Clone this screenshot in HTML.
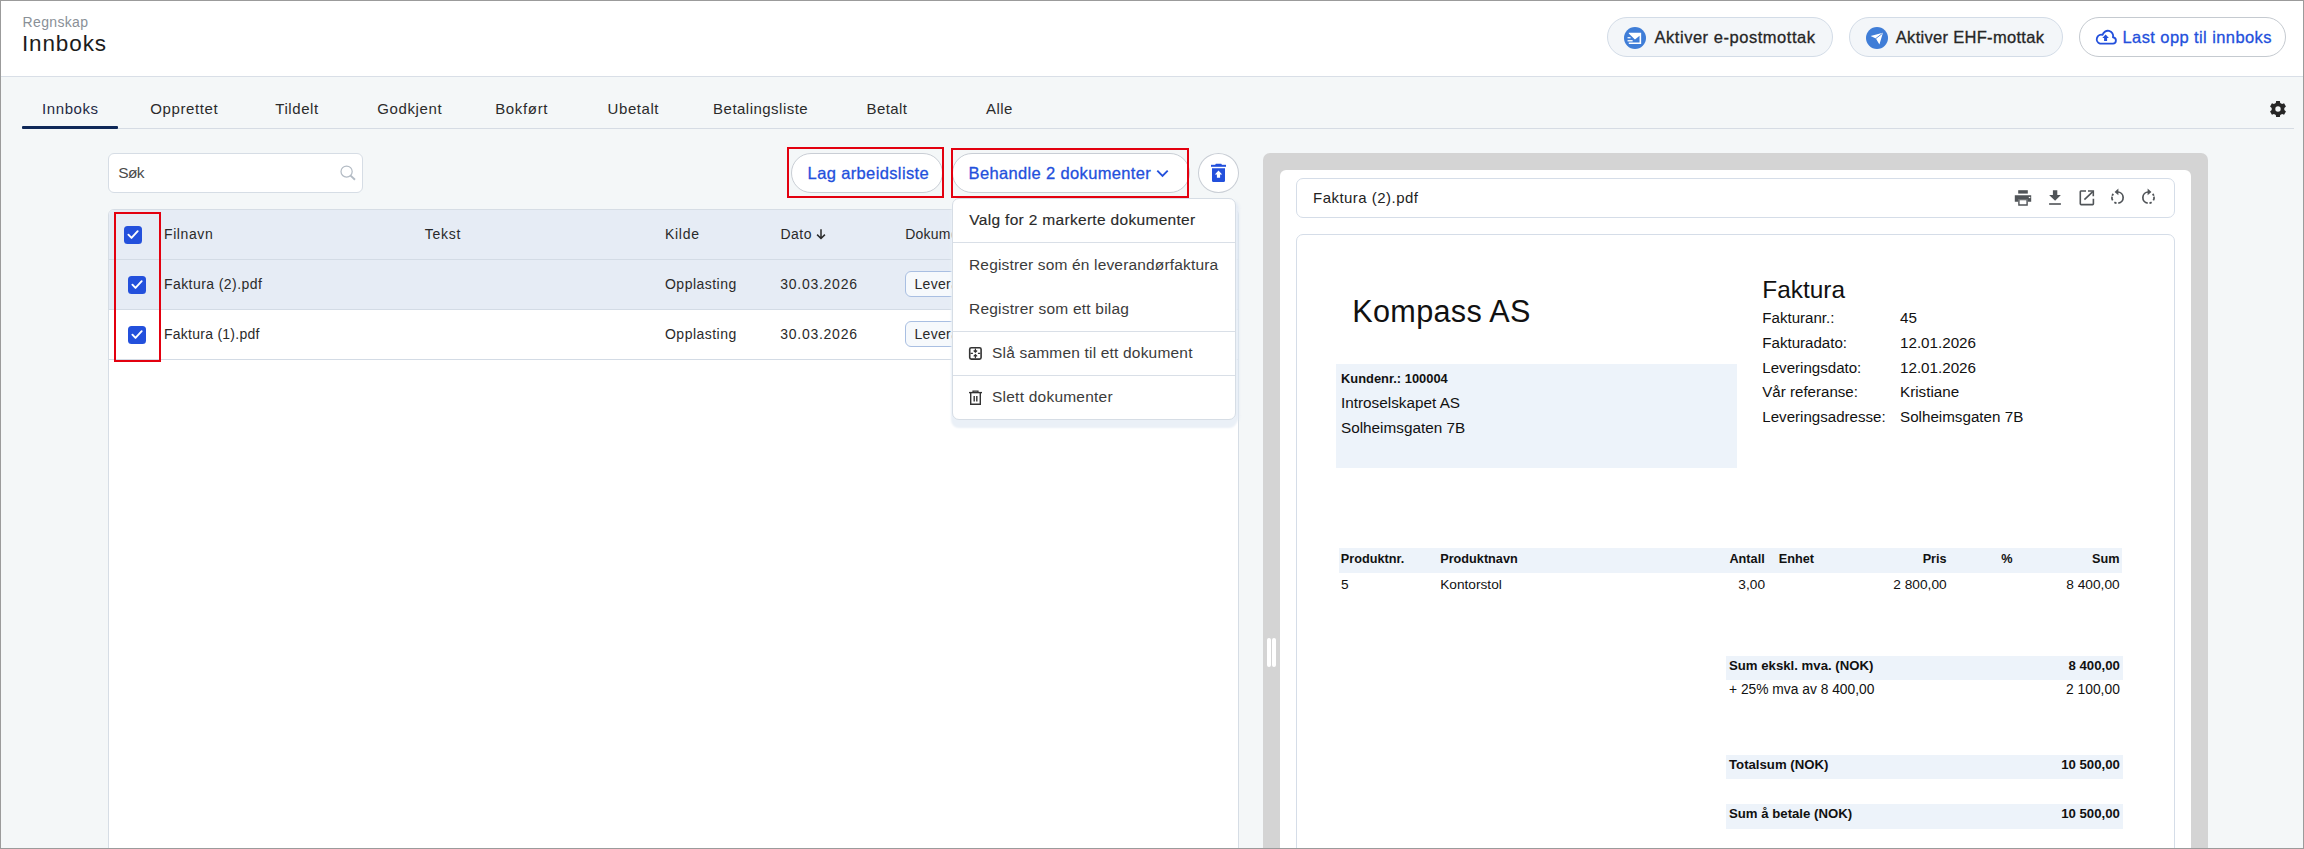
<!DOCTYPE html>
<html><head><meta charset="utf-8"><title>Innboks</title>
<style>
html,body{margin:0;padding:0}
body{width:2304px;height:849px;position:relative;overflow:hidden;background:#f4f7f8;font-family:"Liberation Sans",sans-serif}
.t{position:absolute;line-height:1;white-space:nowrap}
svg{display:block}
</style></head><body>
<div style="position:absolute;left:0px;top:0px;width:2304px;height:77px;box-sizing:border-box;background:#fff;border-bottom:1px solid #d9dfe7"></div>
<div class="t" style="left:22.60px;top:15.00px;font-size:14px;color:#8a9097;font-weight:400;letter-spacing:0.329px;">Regnskap</div>
<div class="t" style="left:21.90px;top:33.05px;font-size:22.5px;color:#1c1c1c;font-weight:400;letter-spacing:0.9px;">Innboks</div>
<div style="position:absolute;left:1607px;top:17px;width:226px;height:40px;box-sizing:border-box;background:#f3f6f9;border:1px solid #d3dce7;border-radius:20px"></div>
<svg style="position:absolute;left:1624px;top:26.7px" width="22" height="22" viewBox="0 0 22 22">
<circle cx="11" cy="11" r="11" fill="#3f7dd7"/>
<path d="M4.8 5.65 H17.15 V17 H4.8 V15.55 H15.55 V8.85 L10.95 12.4 L4.8 6.4 Z" fill="#fff"/>
<rect x="3.55" y="10.1" width="3" height="1.25" fill="#fff"/><rect x="3.55" y="13.1" width="5.1" height="1.35" fill="#fff"/>
</svg>
<div class="t" style="left:1654.50px;top:28.75px;font-size:16.5px;color:#262626;font-weight:400;letter-spacing:0.532px;-webkit-text-stroke:0.3px #262626">Aktiver e-postmottak</div>
<div style="position:absolute;left:1849px;top:17px;width:214px;height:40px;box-sizing:border-box;background:#f3f6f9;border:1px solid #d3dce7;border-radius:20px"></div>
<svg style="position:absolute;left:1866px;top:26.7px" width="22" height="22" viewBox="0 0 22 22">
<circle cx="11" cy="11" r="11" fill="#3f7dd7"/>
<path d="M4.6 9.0 L16.95 5.85 L13.4 17.5 L9.9 11.5 Z" fill="#fff"/>
<path d="M9.6 11.7 L16.4 6.4" stroke="#3f7dd7" stroke-width="0.9"/>
</svg>
<div class="t" style="left:1895.80px;top:28.75px;font-size:16.5px;color:#262626;font-weight:400;letter-spacing:0.3px;-webkit-text-stroke:0.3px #262626">Aktiver EHF-mottak</div>
<div style="position:absolute;left:2079px;top:17px;width:207px;height:40px;box-sizing:border-box;background:#fff;border:1px solid #c5cad0;border-radius:20px"></div>
<svg style="position:absolute;left:2093.5px;top:28px" width="24" height="20" viewBox="0 0 24 20">
<path d="M6 15.6 H18.6 A3.1 3.1 0 0 0 19 9.4 A5.3 5.3 0 0 0 8.6 6.9 A4.2 4.2 0 0 0 6 15.6 Z" fill="none" stroke="#2350dc" stroke-width="1.85" stroke-linejoin="round"/>
<path d="M11.6 6.6 L14.9 10.1 H13.1 V12.9 H10.1 V10.1 H8.3 Z" fill="#2350dc"/>
</svg>
<div class="t" style="left:2122.50px;top:28.75px;font-size:16.5px;color:#2350dc;font-weight:400;letter-spacing:0.405px;-webkit-text-stroke:0.3px #2350dc">Last opp til innboks</div>
<div class="t" style="left:42.10px;top:101.10px;font-size:15px;color:#1f2a44;font-weight:400;letter-spacing:0.566px;">Innboks</div>
<div class="t" style="left:150.30px;top:101.10px;font-size:15px;color:#2b2b2b;font-weight:400;letter-spacing:0.6px;">Opprettet</div>
<div class="t" style="left:275.30px;top:101.10px;font-size:15px;color:#2b2b2b;font-weight:400;letter-spacing:0.567px;">Tildelt</div>
<div class="t" style="left:377.20px;top:101.10px;font-size:15px;color:#2b2b2b;font-weight:400;letter-spacing:0.628px;">Godkjent</div>
<div class="t" style="left:495.20px;top:101.10px;font-size:15px;color:#2b2b2b;font-weight:400;letter-spacing:0.667px;">Bokført</div>
<div class="t" style="left:607.60px;top:101.10px;font-size:15px;color:#2b2b2b;font-weight:400;letter-spacing:0.567px;">Ubetalt</div>
<div class="t" style="left:713.10px;top:101.10px;font-size:15px;color:#2b2b2b;font-weight:400;letter-spacing:0.477px;">Betalingsliste</div>
<div class="t" style="left:866.60px;top:101.10px;font-size:15px;color:#2b2b2b;font-weight:400;letter-spacing:0.4px;">Betalt</div>
<div class="t" style="left:986.10px;top:101.10px;font-size:15px;color:#2b2b2b;font-weight:400;letter-spacing:0.4px;">Alle</div>
<div style="position:absolute;left:22px;top:128px;width:2272px;height:1px;box-sizing:border-box;background:#d6dce4"></div>
<div style="position:absolute;left:22px;top:126px;width:96px;height:3px;box-sizing:border-box;background:#0e2858;border-radius:1px"></div>
<svg style="position:absolute;left:2269px;top:100px" width="18" height="18" viewBox="0 0 18 18">
<path fill="#262626" fill-rule="evenodd" d="M6.81 2.99 L7.13 0.91 L10.87 0.91 L11.19 2.99 L13.11 4.10 L15.07 3.34 L16.94 6.57 L15.30 7.89 L15.30 10.11 L16.94 11.43 L15.07 14.66 L13.11 13.90 L11.19 15.01 L10.87 17.09 L7.13 17.09 L6.81 15.01 L4.89 13.90 L2.93 14.66 L1.06 11.43 L2.70 10.11 L2.70 7.89 L1.06 6.57 L2.93 3.34 L4.89 4.10 Z M11.7 9 A2.7 2.7 0 1 0 6.3 9 A2.7 2.7 0 1 0 11.7 9 Z"/>
</svg>
<div style="position:absolute;left:108px;top:153px;width:255px;height:40px;box-sizing:border-box;background:#fff;border:1px solid #d6dde5;border-radius:6px"></div>
<div class="t" style="left:118.20px;top:164.75px;font-size:15.5px;color:#4a4a4a;font-weight:400;letter-spacing:-0.6px;">Søk</div>
<svg style="position:absolute;left:338px;top:163px" width="20" height="20" viewBox="0 0 20 20">
<circle cx="8.6" cy="8.6" r="5.6" fill="none" stroke="#b3bbc4" stroke-width="1.25"/>
<path d="M12.6 12.6 L17 16.8" stroke="#b3bbc4" stroke-width="1.9"/>
</svg>
<div style="position:absolute;left:791px;top:153px;width:152px;height:40px;box-sizing:border-box;background:#fff;border:1px solid #c9ced5;border-radius:20px"></div>
<div class="t" style="left:807.60px;top:164.75px;font-size:16.5px;color:#2350dc;font-weight:400;letter-spacing:0.367px;-webkit-text-stroke:0.3px #2350dc">Lag arbeidsliste</div>
<div style="position:absolute;left:952px;top:153px;width:238px;height:40px;box-sizing:border-box;background:#fff;border:1px solid #c9ced5;border-radius:20px"></div>
<div class="t" style="left:968.60px;top:164.75px;font-size:16.5px;color:#2350dc;font-weight:400;letter-spacing:0.35px;-webkit-text-stroke:0.3px #2350dc">Behandle 2 dokumenter</div>
<svg style="position:absolute;left:1155px;top:167px" width="15" height="13" viewBox="0 0 15 13">
<path d="M2.3 3.6 L7.5 8.8 L12.7 3.6" fill="none" stroke="#2350dc" stroke-width="1.9"/>
</svg>
<div style="position:absolute;left:1198px;top:153px;width:41px;height:40px;box-sizing:border-box;background:#fff;border:1px solid #c9ced5;border-radius:50%"></div>
<svg style="position:absolute;left:1208px;top:162px" width="22" height="22" viewBox="0 0 22 22">
<rect x="3" y="2.8" width="15" height="2" fill="#2350dc"/>
<rect x="7.4" y="1.7" width="6.3" height="2" rx="0.6" fill="#2350dc"/>
<path d="M4 6.3 H17 V18.8 A1.3 1.3 0 0 1 15.7 20 H5.3 A1.3 1.3 0 0 1 4 18.8 Z" fill="#2350dc"/>
<path d="M10.5 8.6 L14.2 12.6 H12.1 V15.8 H8.9 V12.6 H6.8 Z" fill="#fff"/>
</svg>
<div style="position:absolute;left:108px;top:209px;width:1131px;height:700px;box-sizing:border-box;background:#fff;border:1px solid #d6dde5;border-radius:6px 6px 0 0"></div>
<div style="position:absolute;left:109px;top:210px;width:1129px;height:49px;box-sizing:border-box;background:#e6ecf5;border-radius:5px 5px 0 0"></div>
<div style="position:absolute;left:109px;top:259px;width:1129px;height:1px;box-sizing:border-box;background:#d3dbe5"></div>
<div style="position:absolute;left:109px;top:260px;width:1129px;height:49px;box-sizing:border-box;background:#e6ecf5"></div>
<div style="position:absolute;left:109px;top:309px;width:1129px;height:1px;box-sizing:border-box;background:#d3dbe5"></div>
<div style="position:absolute;left:109px;top:359px;width:1129px;height:1px;box-sizing:border-box;background:#d3dbe5"></div>
<div class="t" style="left:164.00px;top:227.10px;font-size:14px;color:#2a2a2a;font-weight:400;letter-spacing:0.6px;">Filnavn</div>
<div class="t" style="left:424.80px;top:227.10px;font-size:14px;color:#2a2a2a;font-weight:400;letter-spacing:0.75px;">Tekst</div>
<div class="t" style="left:665.00px;top:227.10px;font-size:14px;color:#2a2a2a;font-weight:400;letter-spacing:0.7px;">Kilde</div>
<div class="t" style="left:780.40px;top:227.10px;font-size:14px;color:#2a2a2a;font-weight:400;letter-spacing:0.533px;">Dato</div>
<svg style="position:absolute;left:815px;top:227px" width="12" height="14" viewBox="0 0 12 14">
<path d="M6 2.3 V11.5 M2.1 7.6 L6 11.5 L9.9 7.6" fill="none" stroke="#2a2a2a" stroke-width="1.5"/>
</svg>
<div class="t" style="left:905.20px;top:227.10px;font-size:14px;color:#2a2a2a;font-weight:400;letter-spacing:0.25px;">Dokumenttype</div>
<div class="t" style="left:164.00px;top:276.80px;font-size:14px;color:#2a2a2a;font-weight:400;letter-spacing:0.428px;">Faktura (2).pdf</div>
<div class="t" style="left:665.00px;top:276.80px;font-size:14px;color:#2a2a2a;font-weight:400;letter-spacing:0.477px;">Opplasting</div>
<div class="t" style="left:780.20px;top:276.80px;font-size:14px;color:#2a2a2a;font-weight:400;letter-spacing:0.745px;">30.03.2026</div>
<div style="position:absolute;left:905px;top:271.3px;width:140px;height:26px;box-sizing:border-box;background:#f6f9fc;border:1px solid #a9bfe2;border-radius:6px"></div>
<div class="t" style="left:914.50px;top:276.80px;font-size:14px;color:#2a2a2a;font-weight:400;letter-spacing:0.3px;">Leverandørfaktura</div>
<div class="t" style="left:164.00px;top:326.80px;font-size:14px;color:#2a2a2a;font-weight:400;letter-spacing:0.256px;">Faktura (1).pdf</div>
<div class="t" style="left:665.00px;top:326.80px;font-size:14px;color:#2a2a2a;font-weight:400;letter-spacing:0.477px;">Opplasting</div>
<div class="t" style="left:780.20px;top:326.80px;font-size:14px;color:#2a2a2a;font-weight:400;letter-spacing:0.745px;">30.03.2026</div>
<div style="position:absolute;left:905px;top:321.3px;width:140px;height:26px;box-sizing:border-box;background:#f6f9fc;border:1px solid #a9bfe2;border-radius:6px"></div>
<div class="t" style="left:914.50px;top:326.80px;font-size:14px;color:#2a2a2a;font-weight:400;letter-spacing:0.3px;">Leverandørfaktura</div>
<svg style="position:absolute;left:124px;top:226px" width="18" height="18" viewBox="0 0 18 18">
<rect x="0" y="0" width="18" height="18" rx="3.5" fill="#2350dc"/>
<path d="M4.4 8.7 L7.5 11.9 L13.7 5.2" fill="none" stroke="#fff" stroke-width="1.9" stroke-linecap="round" stroke-linejoin="round"/>
</svg>
<svg style="position:absolute;left:128px;top:276px" width="18" height="18" viewBox="0 0 18 18">
<rect x="0" y="0" width="18" height="18" rx="3.5" fill="#2350dc"/>
<path d="M4.4 8.7 L7.5 11.9 L13.7 5.2" fill="none" stroke="#fff" stroke-width="1.9" stroke-linecap="round" stroke-linejoin="round"/>
</svg>
<svg style="position:absolute;left:128px;top:326px" width="18" height="18" viewBox="0 0 18 18">
<rect x="0" y="0" width="18" height="18" rx="3.5" fill="#2350dc"/>
<path d="M4.4 8.7 L7.5 11.9 L13.7 5.2" fill="none" stroke="#fff" stroke-width="1.9" stroke-linecap="round" stroke-linejoin="round"/>
</svg>
<div style="position:absolute;left:114px;top:212px;width:47px;height:150px;box-sizing:border-box;border:2px solid #e3000f"></div>
<div style="position:absolute;left:787px;top:147px;width:157px;height:51px;box-sizing:border-box;border:2px solid #e3000f"></div>
<div style="position:absolute;left:951px;top:148px;width:238px;height:50px;box-sizing:border-box;border:2px solid #e3000f"></div>
<div style="position:absolute;left:952px;top:198px;width:284px;height:222px;box-sizing:border-box;background:#fff;border:1px solid #d6dde5;border-radius:7px;box-shadow:0 7px 2px 1px #eaf0f7, 3px 3px 3px 0 rgba(225,233,244,0.8)"></div>
<div class="t" style="left:969.30px;top:212.05px;font-size:15.5px;color:#2a2a2a;font-weight:400;letter-spacing:0.314px;-webkit-text-stroke:0.15px #2a2a2a">Valg for 2 markerte dokumenter</div>
<div style="position:absolute;left:953px;top:242px;width:282px;height:1px;box-sizing:border-box;background:#d9dfe7"></div>
<div class="t" style="left:969.00px;top:256.75px;font-size:15.5px;color:#3b3b3b;font-weight:400;letter-spacing:0.162px;">Registrer som én leverandørfaktura</div>
<div class="t" style="left:969.00px;top:300.75px;font-size:15.5px;color:#3b3b3b;font-weight:400;letter-spacing:0.222px;">Registrer som ett bilag</div>
<div style="position:absolute;left:953px;top:331px;width:282px;height:1px;box-sizing:border-box;background:#d9dfe7"></div>
<svg style="position:absolute;left:968px;top:346px" width="15" height="15" viewBox="0 0 15 15">
<rect x="1.7" y="1.7" width="11.4" height="11.4" rx="1.6" fill="none" stroke="#333" stroke-width="1.6"/>
<path d="M7.4 2.5 V6.1 M5.7 4.5 L7.4 6.2 L9.1 4.5 M7.4 12.3 V8.7 M5.7 10.3 L7.4 8.6 L9.1 10.3 M2.5 7.4 H4.9 M9.9 7.4 H12.3" fill="none" stroke="#333" stroke-width="1.2"/>
</svg>
<div class="t" style="left:992.00px;top:344.75px;font-size:15.5px;color:#3b3b3b;font-weight:400;letter-spacing:0.188px;">Slå sammen til ett dokument</div>
<div style="position:absolute;left:953px;top:375px;width:282px;height:1px;box-sizing:border-box;background:#d9dfe7"></div>
<svg style="position:absolute;left:968px;top:390px" width="15" height="16" viewBox="0 0 15 16">
<path d="M1 2.6 H14" stroke="#333" stroke-width="1.4"/>
<path d="M5 2 V1.2 H10 V2" stroke="#333" stroke-width="1.2" fill="none"/>
<path d="M2.7 3 V14.2 H12.3 V3" stroke="#333" stroke-width="1.4" fill="none"/>
<path d="M6.2 6 V11.4 M8.8 6 V11.4" stroke="#333" stroke-width="1.4"/>
</svg>
<div class="t" style="left:992.00px;top:388.75px;font-size:15.5px;color:#3b3b3b;font-weight:400;letter-spacing:0.23px;">Slett dokumenter</div>
<div style="position:absolute;left:1263px;top:153px;width:945px;height:720px;box-sizing:border-box;background:#d4d4d4;border-radius:7px"></div>
<div style="position:absolute;left:1280px;top:170px;width:911px;height:700px;box-sizing:border-box;background:#fff;border-radius:6px"></div>
<div style="position:absolute;left:1296px;top:178px;width:879px;height:40px;box-sizing:border-box;background:#fff;border:1px solid #d5dde8;border-radius:7px"></div>
<div class="t" style="left:1313.00px;top:189.90px;font-size:15px;color:#222;font-weight:400;letter-spacing:0.471px;">Faktura (2).pdf</div>
<svg style="position:absolute;left:2014px;top:189px" width="18" height="18" viewBox="0 0 18 18">
<rect x="4.2" y="1.2" width="9.6" height="3.4" fill="#505458"/>
<path d="M0.8 6.2 H17.2 V12.8 H13.8 V10.8 H4.2 V12.8 H0.8 Z" fill="#505458"/>
<path d="M4.2 10.8 H13.8 V16.8 H4.2 Z M5.6 11.2 V15.2 H12.4 V11.2 Z" fill="#505458" fill-rule="evenodd"/>
<rect x="14.8" y="7.9" width="1.5" height="1.2" fill="#fff"/>
</svg>
<svg style="position:absolute;left:2048px;top:189px" width="14" height="18" viewBox="0 0 14 18">
<path d="M4.9 1.2 H9.3 V6 H12.9 L7.1 11.8 L1.1 6 H4.9 Z" fill="#505458"/>
<rect x="1.1" y="14.2" width="11.8" height="1.6" fill="#505458"/>
</svg>
<svg style="position:absolute;left:2078px;top:189px" width="17" height="17" viewBox="0 0 17 17">
<path d="M8 2 H3 A0.8 0.8 0 0 0 2.3 2.8 V14.8 A0.8 0.8 0 0 0 3 15.6 H14.6 A0.8 0.8 0 0 0 15.4 14.8 V9.7" fill="none" stroke="#505458" stroke-width="1.6"/>
<path d="M10 2 H15.3 V7.2" fill="none" stroke="#505458" stroke-width="1.6"/>
<path d="M6.4 10.6 L14.8 2.6" fill="none" stroke="#505458" stroke-width="1.6"/>
</svg>
<svg style="position:absolute;left:2109px;top:187.2px" width="17" height="18" viewBox="0 0 17 18">
<path d="M8.70 5.00 A5.6 5.6 0 0 1 9.28 16.15" fill="none" stroke="#505458" stroke-width="1.7"/>
<path d="M7.53 16.11 A5.6 5.6 0 0 1 5.37 15.24 M3.65 13.40 A5.6 5.6 0 0 1 2.99 9.63 M3.24 8.68 A5.6 5.6 0 0 1 4.34 6.85" fill="none" stroke="#505458" stroke-width="1.7"/>
<path d="M9.4 1.6 L5.6 5 L9.4 8.3 Z" fill="#505458"/>
</svg>
<svg style="position:absolute;left:2140px;top:187.2px" width="17" height="18" viewBox="0 0 17 18">
<g transform="translate(17,0) scale(-1,1)"><path d="M8.70 5.00 A5.6 5.6 0 0 1 9.28 16.15" fill="none" stroke="#505458" stroke-width="1.7"/>
<path d="M7.53 16.11 A5.6 5.6 0 0 1 5.37 15.24 M3.65 13.40 A5.6 5.6 0 0 1 2.99 9.63 M3.24 8.68 A5.6 5.6 0 0 1 4.34 6.85" fill="none" stroke="#505458" stroke-width="1.7"/>
<path d="M9.4 1.6 L5.6 5 L9.4 8.3 Z" fill="#505458"/></g>
</svg>
<div style="position:absolute;left:1296px;top:234px;width:879px;height:700px;box-sizing:border-box;background:#fff;border:1px solid #d5dde8;border-radius:7px"></div>
<div style="position:absolute;left:1267px;top:638px;width:3.6px;height:29px;box-sizing:border-box;background:#fff;border-radius:2px"></div>
<div style="position:absolute;left:1272.4px;top:638px;width:3.6px;height:29px;box-sizing:border-box;background:#fff;border-radius:2px"></div>
<div class="t" style="left:1352.30px;top:295.90px;font-size:30.6px;color:#111;font-weight:400;letter-spacing:0.315px;">Kompass AS</div>
<div style="position:absolute;left:1336px;top:364px;width:401px;height:104px;box-sizing:border-box;background:#edf3fa"></div>
<div class="t" style="left:1341.00px;top:372.65px;font-size:12.9px;color:#111;font-weight:700;letter-spacing:0px;">Kundenr.: 100004</div>
<div class="t" style="left:1341.00px;top:395.05px;font-size:15.3px;color:#111;font-weight:400;letter-spacing:0px;">Introselskapet AS</div>
<div class="t" style="left:1341.00px;top:419.85px;font-size:15.3px;color:#111;font-weight:400;letter-spacing:0px;">Solheimsgaten 7B</div>
<div class="t" style="left:1762.30px;top:277.50px;font-size:24.4px;color:#111;font-weight:400;letter-spacing:0px;">Faktura</div>
<div class="t" style="left:1762.30px;top:310.15px;font-size:15.1px;color:#111;font-weight:400;letter-spacing:0px;">Fakturanr.:</div>
<div class="t" style="left:1900.00px;top:310.10px;font-size:15.2px;color:#111;font-weight:400;letter-spacing:0px;">45</div>
<div class="t" style="left:1762.30px;top:334.95px;font-size:15.1px;color:#111;font-weight:400;letter-spacing:0px;">Fakturadato:</div>
<div class="t" style="left:1900.00px;top:334.90px;font-size:15.2px;color:#111;font-weight:400;letter-spacing:0px;">12.01.2026</div>
<div class="t" style="left:1762.30px;top:359.55px;font-size:15.1px;color:#111;font-weight:400;letter-spacing:0px;">Leveringsdato:</div>
<div class="t" style="left:1900.00px;top:359.50px;font-size:15.2px;color:#111;font-weight:400;letter-spacing:0px;">12.01.2026</div>
<div class="t" style="left:1762.30px;top:384.35px;font-size:15.1px;color:#111;font-weight:400;letter-spacing:0px;">Vår referanse:</div>
<div class="t" style="left:1900.00px;top:384.30px;font-size:15.2px;color:#111;font-weight:400;letter-spacing:0px;">Kristiane</div>
<div class="t" style="left:1762.30px;top:409.15px;font-size:15.1px;color:#111;font-weight:400;letter-spacing:0px;">Leveringsadresse:</div>
<div class="t" style="left:1900.00px;top:409.10px;font-size:15.2px;color:#111;font-weight:400;letter-spacing:0px;">Solheimsgaten 7B</div>
<div style="position:absolute;left:1339px;top:548px;width:783px;height:25px;box-sizing:border-box;background:#edf3fa"></div>
<div class="t" style="left:1340.80px;top:552.65px;font-size:12.7px;color:#111;font-weight:700;letter-spacing:0px;">Produktnr.</div>
<div class="t" style="left:1440.20px;top:552.65px;font-size:12.7px;color:#111;font-weight:700;letter-spacing:0px;">Produktnavn</div>
<div class="t" style="right:539.30px;top:552.65px;font-size:12.7px;color:#111;font-weight:700;letter-spacing:0px;">Antall</div>
<div class="t" style="left:1778.70px;top:552.65px;font-size:12.7px;color:#111;font-weight:700;letter-spacing:0px;">Enhet</div>
<div class="t" style="right:357.40px;top:552.65px;font-size:12.7px;color:#111;font-weight:700;letter-spacing:0px;">Pris</div>
<div class="t" style="right:291.40px;top:552.65px;font-size:12.7px;color:#111;font-weight:700;letter-spacing:0px;">%</div>
<div class="t" style="right:184.40px;top:552.65px;font-size:12.7px;color:#111;font-weight:700;letter-spacing:0px;">Sum</div>
<div class="t" style="left:1341.00px;top:578.45px;font-size:13.7px;color:#111;font-weight:400;letter-spacing:0px;">5</div>
<div class="t" style="left:1440.20px;top:578.45px;font-size:13.7px;color:#111;font-weight:400;letter-spacing:0px;">Kontorstol</div>
<div class="t" style="right:539.00px;top:578.45px;font-size:13.7px;color:#111;font-weight:400;letter-spacing:0px;">3,00</div>
<div class="t" style="right:357.40px;top:578.45px;font-size:13.7px;color:#111;font-weight:400;letter-spacing:0px;">2 800,00</div>
<div class="t" style="right:184.40px;top:578.45px;font-size:13.7px;color:#111;font-weight:400;letter-spacing:0px;">8 400,00</div>
<div style="position:absolute;left:1726px;top:656px;width:397px;height:24px;box-sizing:border-box;background:#edf3fa"></div>
<div class="t" style="left:1729.00px;top:658.90px;font-size:13.2px;color:#111;font-weight:700;letter-spacing:0px;">Sum ekskl. mva. (NOK)</div>
<div class="t" style="right:184.20px;top:658.90px;font-size:13.2px;color:#111;font-weight:700;letter-spacing:0px;">8 400,00</div>
<div class="t" style="left:1729.00px;top:683.20px;font-size:13.8px;color:#111;font-weight:400;letter-spacing:0px;">+ 25% mva av 8 400,00</div>
<div class="t" style="right:184.20px;top:683.20px;font-size:13.8px;color:#111;font-weight:400;letter-spacing:0px;">2 100,00</div>
<div style="position:absolute;left:1726px;top:755px;width:397px;height:24px;box-sizing:border-box;background:#edf3fa"></div>
<div class="t" style="left:1729.00px;top:757.60px;font-size:13.2px;color:#111;font-weight:700;letter-spacing:0px;">Totalsum (NOK)</div>
<div class="t" style="right:184.20px;top:757.60px;font-size:13.2px;color:#111;font-weight:700;letter-spacing:0px;">10 500,00</div>
<div style="position:absolute;left:1726px;top:804px;width:397px;height:25px;box-sizing:border-box;background:#edf3fa"></div>
<div class="t" style="left:1729.00px;top:807.30px;font-size:13.2px;color:#111;font-weight:700;letter-spacing:0px;">Sum å betale (NOK)</div>
<div class="t" style="right:184.20px;top:807.30px;font-size:13.2px;color:#111;font-weight:700;letter-spacing:0px;">10 500,00</div>
<div style="position:absolute;left:0px;top:0px;width:2304px;height:849px;box-sizing:border-box;border:1px solid #9b9b9b;z-index:50"></div>
</body></html>
